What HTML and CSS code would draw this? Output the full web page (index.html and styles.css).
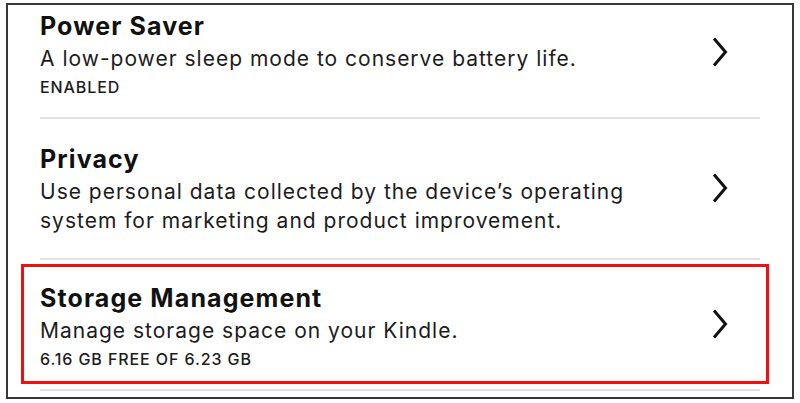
FILE: index.html
```html
<!DOCTYPE html>
<html lang="en">
<head>
<meta charset="utf-8">
<title>Settings</title>
<link rel="stylesheet" href="styles.css">
</head>
<body>
<div class="frame">
  <div class="list">
    <div class="item item-top item-meta">
      <div class="text">
        <div class="title">Power Saver</div>
        <div class="desc">A low-power sleep mode to conserve battery life.</div>
        <div class="meta">ENABLED</div>
      </div>
      <svg class="chev" width="18" height="32" viewBox="0 0 18 32"><path d="M3 2.5 L14.5 16 L3 29.5" /></svg>
    </div>
    <div class="sep"></div>
    <div class="item">
      <div class="text">
        <div class="title">Privacy</div>
        <div class="desc">Use personal data collected by the device’s operating system for marketing and product improvement.</div>
      </div>
      <svg class="chev" width="18" height="32" viewBox="0 0 18 32"><path d="M3 2.5 L14.5 16 L3 29.5" /></svg>
    </div>
    <div class="sep"></div>
    <div class="highlight">
      <div class="item item-hl">
        <div class="text">
          <div class="title">Storage Management</div>
          <div class="desc">Manage storage space on your Kindle.</div>
          <div class="meta">6.16 GB FREE OF 6.23 GB</div>
        </div>
        <svg class="chev" width="18" height="32" viewBox="0 0 18 32"><path d="M3 2.5 L14.5 16 L3 29.5" /></svg>
      </div>
    </div>
    <div class="sep sep-last"></div>
  </div>
</div>
</body>
</html>
```
FILE: styles.css
```css
html, body {
  margin: 0;
  padding: 0;
  background: #ffffff;
}
body {
  font-family: Inter, "Noto Sans", sans-serif;
  color: #141414;
}
.frame {
  box-sizing: border-box;
  margin: 3px 6px 0 6px;
  height: 396px;
  border: 2px solid #383838;
  overflow: hidden;
  padding: 0 32px;
  background: #fff;
}
.list {
  display: flex;
  flex-direction: column;
}
.item {
  display: flex;
  align-items: center;
  justify-content: space-between;
  padding: 25px 0 23px 0;
}
.item-top {
  padding-top: 6px;
}
.item-meta {
  padding-bottom: 20px;
}
.text {
  flex: 1;
  max-width: 630px;
}
.title {
  font-size: 25px;
  line-height: 30px;
  font-weight: 700;
  letter-spacing: 1.1px;
  color: #111;
}
.desc {
  margin-top: 3px;
  font-size: 21px;
  line-height: 29px;
  font-weight: 400;
  letter-spacing: 1px;
  color: #1c1c1c;
}
.meta {
  margin-top: 4px;
  font-size: 16px;
  line-height: 20px;
  font-weight: 500;
  letter-spacing: 0.9px;
  color: #1c1c1c;
}
.chev {
  flex: none;
  margin-right: 31px;
  margin-top: -4px;
}
.chev path {
  fill: none;
  stroke: #111;
  stroke-width: 3;
}
.sep {
  height: 2px;
  background: #e2e2e2;
}
.highlight {
  margin: 4px -9px 0 -19px;
  border: 3px solid #f01010;
  padding: 0 6px 0 16px;
}
.item-hl {
  padding: 16px 0 12px 0;
}
.sep-last {
  margin-top: 5px;
}
```
